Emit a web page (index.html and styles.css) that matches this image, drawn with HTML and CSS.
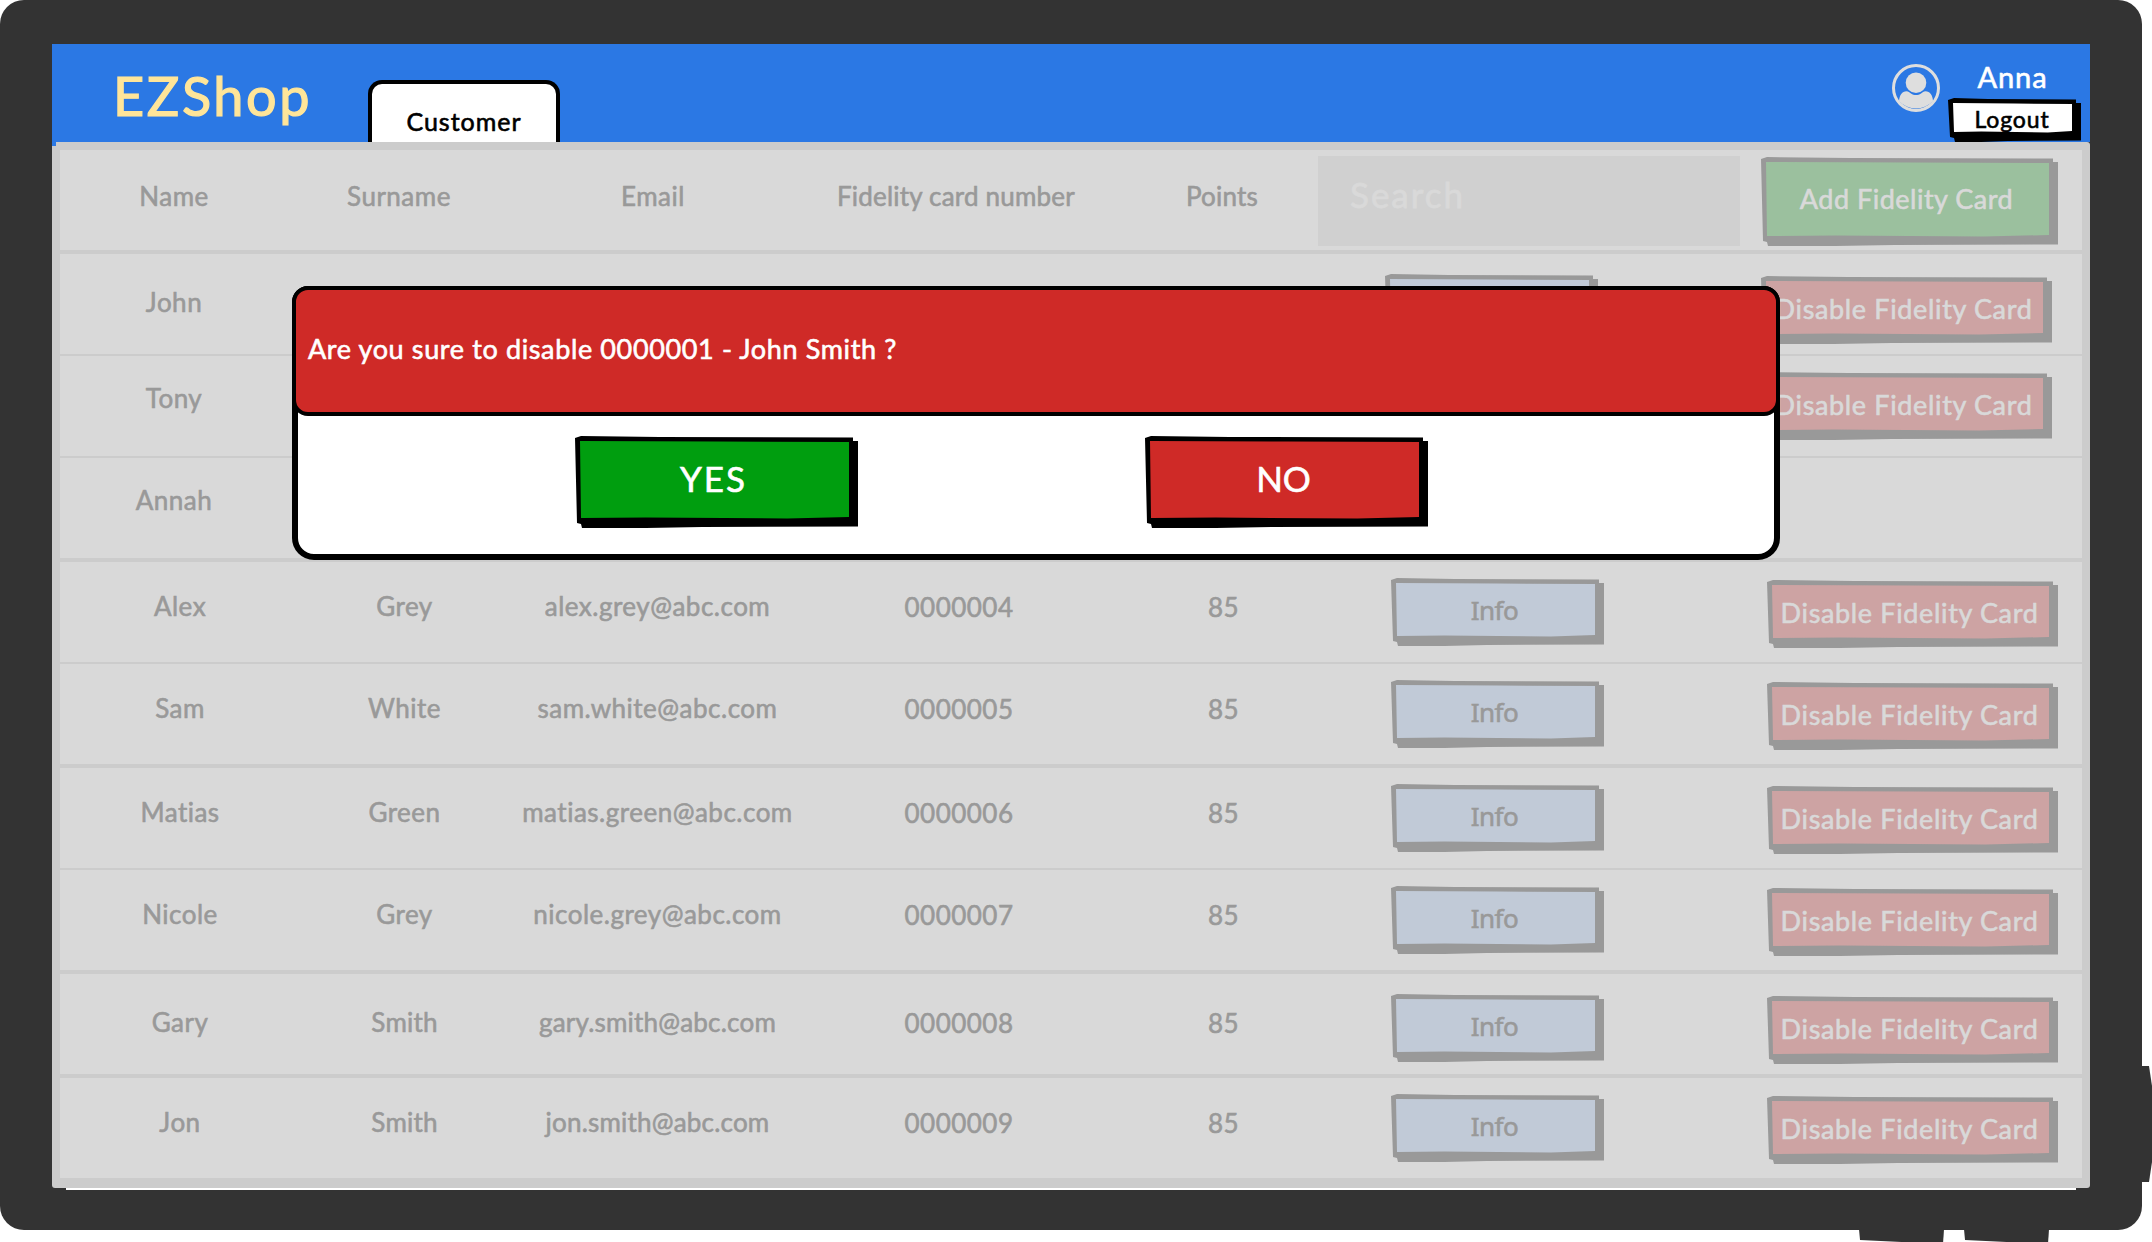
FILE: index.html
```html
<!DOCTYPE html>
<html lang="en">
<head>
<meta charset="utf-8">
<title>EZShop - Customers</title>
<link rel="stylesheet" href="styles.css">
</head>
<body>
<div class="device">
  <i class="knob knob-side"></i><i class="knob knob-a"></i><i class="knob knob-b"></i>
  <div class="screen">
    <header class="topbar">
      <div class="brand">EZShop</div>
      <div class="tab">Customer</div>
      <svg class="avatar" viewBox="0 0 48 48">
        <circle cx="24" cy="24" r="22.5" fill="none" stroke="#dedede" stroke-width="3"/>
        <path d="M7 37C7.500 31 10 27.500 14.500 27.300C16.500 27.300 17.500 28.500 19 29.600C22 31.600 26 31.600 29 29.600C30.500 28.500 31.500 27.300 33.500 27.300C38 27.500 40.500 31 41 37A23 23 0 0 1 7 37Z" fill="#dedede"/>
        <circle cx="24" cy="18.800" r="10.300" fill="#dedede"/>
      </svg>
      <div class="user">
        <div class="user-name">Anna</div>
        <button class="btn logout"><span>Logout</span></button>
      </div>
    </header>
    <main class="panel">
      <div class="row head">
        <span class="t">Name</span><span class="t">Surname</span><span class="t">Email</span><span class="t tight">Fidelity card number</span><span class="t points tight">Points</span>
        <div class="search">Search</div>
        <button class="btn dim add"><span>Add Fidelity Card</span></button>
      </div>
      <div class="row early john"><span class="t">John</span><button class="btn dim info"></button><button class="btn dim disable"><span>Disable Fidelity Card</span></button></div>
      <div class="row early thin tony"><span class="t">Tony</span><button class="btn dim disable"><span>Disable Fidelity Card</span></button></div>
      <div class="row early thin annah"><span class="t">Annah</span></div>
      <div class="row"><span class="t">Alex</span><span class="t">Grey</span><span class="t">alex.grey@abc.com</span><span class="t n">0000004</span><span class="t n">85</span><button class="btn dim info"><span>Info</span></button><button class="btn dim disable"><span>Disable Fidelity Card</span></button></div>
      <div class="row thin"><span class="t">Sam</span><span class="t">White</span><span class="t">sam.white@abc.com</span><span class="t n">0000005</span><span class="t n">85</span><button class="btn dim info"><span>Info</span></button><button class="btn dim disable"><span>Disable Fidelity Card</span></button></div>
      <div class="row"><span class="t">Matias</span><span class="t">Green</span><span class="t">matias.green@abc.com</span><span class="t n">0000006</span><span class="t n">85</span><button class="btn dim info"><span>Info</span></button><button class="btn dim disable"><span>Disable Fidelity Card</span></button></div>
      <div class="row thin"><span class="t">Nicole</span><span class="t">Grey</span><span class="t">nicole.grey@abc.com</span><span class="t n">0000007</span><span class="t n">85</span><button class="btn dim info"><span>Info</span></button><button class="btn dim disable"><span>Disable Fidelity Card</span></button></div>
      <div class="row low"><span class="t">Gary</span><span class="t tight">Smith</span><span class="t tight">gary.smith@abc.com</span><span class="t n">0000008</span><span class="t n">85</span><button class="btn dim info"><span>Info</span></button><button class="btn dim disable"><span>Disable Fidelity Card</span></button></div>
      <div class="row"><span class="t">Jon</span><span class="t tight">Smith</span><span class="t tight">jon.smith@abc.com</span><span class="t n">0000009</span><span class="t n">85</span><button class="btn dim info"><span>Info</span></button><button class="btn dim disable"><span>Disable Fidelity Card</span></button></div>
    </main>
    <div class="base-line"></div>
  </div>
</div>
<div class="modal">
  <div class="modal-head">Are you sure to disable 0000001 - John Smith ?</div>
  <div class="modal-actions">
    <button class="btn choice yes"><span>YES</span></button>
    <button class="btn choice no"><span>NO</span></button>
  </div>
</div>
</body>
</html>
```
FILE: styles.css
```css
* { box-sizing: border-box; }
body { margin: 0; background: #fff; font-family: Lato, "Open Sans", sans-serif; position: relative; height: 1242px; overflow: hidden; -webkit-text-stroke: 0.6px currentColor; }

/* Device frame */
.device { position: relative; width: 2142px; height: 1230px; padding: 44px 52px 40px; background: #333; border-radius: 24px; }
.knob { position: absolute; background: #333; }
.knob-side { left: 2141px; top: 1066px; width: 11px; height: 116px; clip-path: polygon(0 0, 8px 0, 100% 20px, 100% 96px, 8px 100%, 0 100%); }
.knob-a, .knob-b { top: 1229px; width: 85px; height: 13px; clip-path: polygon(0 0, 100% 0, 99% 100%, 50% 100%, 1px 11px); }
.knob-a { left: 1859px; }
.knob-b { left: 1964px; }
.screen { width: 2038px; }
.base-line { width: 2010px; height: 2px; margin-left: 14px; background: #fff; }

/* Top bar */
.topbar { display: flex; height: 98px; background: #2b78e4; }
.brand { width: 316px; padding: 20px 0 0 61px; font-size: 54px; line-height: 64px; letter-spacing: 2.600px; color: #ffe599; -webkit-text-stroke: 1.2px #ffe599; }
.tab { width: 192px; margin-top: 36px; padding-top: 22px; border: 4px solid #000; border-bottom: 0; border-radius: 14px 14px 0 0; background: #fff; text-align: center; font-size: 25px; line-height: 30px; letter-spacing: 1px; color: #000; }
.avatar { width: 48px; height: 48px; margin: 20px 8px 0 auto; }
.user { width: 142px; padding-top: 16px; }
.user-name { width: 129px; height: 38px; text-align: center; font-size: 29px; line-height: 34px; letter-spacing: .9px; color: #fff; -webkit-text-stroke: .6px #fff; }

/* Hand-drawn buttons: the element is ink and shadow, ::before is the face */
.btn { --ink: #000; --face: #fff; --lift: -2px; position: relative; display: block; border: 0; margin: 0; padding: 0 6px 0 0; background: var(--ink); font-family: inherit; text-align: center; white-space: nowrap;
  clip-path: polygon(0 2px, 6px 0, 30% 1px, calc(100% - 5px) 1.500px, calc(100% - 5px) 5px, 100% 5px, 100% calc(100% - 1.500px), 45% calc(100% - 1px), 25% 100%, 7px 100%, 6px calc(100% - 4px), 2px calc(100% - 5px)); }
.btn::before { content: ""; position: absolute; inset: 0; background: var(--face);
  clip-path: polygon(5px 5px, 50% 5.500px, calc(100% - 9px) 6px, calc(100% - 9px) calc(100% - 11px), 75% calc(100% - 9.500px), 25% calc(100% - 10.500px), 6px calc(100% - 10px)); }
.btn span { position: relative; display: block; margin-top: calc(var(--lift) * 2); -webkit-text-stroke: .6px currentColor; }
.dim { --ink: #999; color: #d9d9d9; font-size: 27px; line-height: 32px; letter-spacing: .65px; }
.btn.dim { align-self: start; height: 68px; }
.logout { --lift: -1.500px; width: 133px; height: 44px; padding-right: 5px; font-size: 23px; line-height: 28px; letter-spacing: .9px; color: #000; margin-left: 0; }
.add { --face: #9bc09e; --lift: -2.500px; width: 297px; letter-spacing: .5px; }
.btn.add { height: 89px; margin: 7px 0 0 -1px; }
.disable { --face: #cda3a3; --lift: -1.500px; width: 291px; margin-top: var(--disable); }
.info { --face: #c1cad7; --lift: -2.500px; width: 213px; margin: var(--info) 0 0 56px; color: #999; font-family: "Noto Sans", sans-serif; font-size: 26px; letter-spacing: -.5px; }

/* Customer table */
.panel { position: relative; padding: 8px 8px 10px; background: #ccc; border-radius: 0 3px 3px 3px; }
.panel::before { content: ""; position: absolute; left: 0; top: 0; width: 4px; height: 4px; background: #2b78e4; }
.row { --text: 29px; --info: 16px; --disable: 18px; display: grid; grid-template-columns: 240px 209px 297px 306px 223px 432px 1fr; height: 100px; margin-top: 4px; background: #d9d9d9; }
.row.thin { margin-top: 2px; }
.row.low { --text: 33px; --info: 20px; --disable: 22px; }
.t { padding-top: var(--text); text-align: center; font-size: 26px; line-height: 30px; letter-spacing: .5px; color: #999; white-space: nowrap; -webkit-text-stroke: .6px #999; }
.t.n { padding-top: calc(var(--text) + 1px); }
.t.tight { letter-spacing: .2px; }
.row.head { --text: 31px; margin-top: 0; grid-template-columns: 228px 222px 286px 320px 202px 444px 1fr; }
.search { width: 422px; height: 90px; margin-top: 6px; padding: 17px 0 0 32px; background: #d0d0d0; color: #d9d9d9; font-size: 35px; line-height: 42px; letter-spacing: 2px; -webkit-text-stroke: .8px #d9d9d9; }
.t.points { padding-left: 10px; }
.row.early { grid-template-columns: 228px 1097px 376px 1fr; }
.early .info { grid-column: 3; margin-left: 0; }
.early .disable { grid-column: 4; }
.row.john { --text: 33px; --info: 20px; --disable: 22px; }
.row.tony { --text: 27px; --disable: 16px; }
.row.annah { --text: 27px; }

/* Confirmation dialog */
.modal { position: absolute; left: 292px; top: 286px; width: 1488px; height: 274px; border: 6px solid #000; border-radius: 16px 16px 22px 22px; background: #fff; }
.modal-head { height: 130px; margin: -6px -6px 0; padding: 43px 0 0 12px; border: 4px solid #000; border-radius: 16px; background: #cf2a27; color: #fff; font-size: 27px; line-height: 32px; letter-spacing: .630px; white-space: nowrap; -webkit-text-stroke: .6px #fff; }
.modal-actions { display: flex; gap: 287px; padding: 20px 0 0 277px; }
.choice { --lift: -4px; width: 283px; height: 92px; color: #fff; font-size: 35px; line-height: 42px; }
.yes { --face: #009e0f; letter-spacing: 2px; }
.no { --face: #cf2a27; letter-spacing: 0; }
```
